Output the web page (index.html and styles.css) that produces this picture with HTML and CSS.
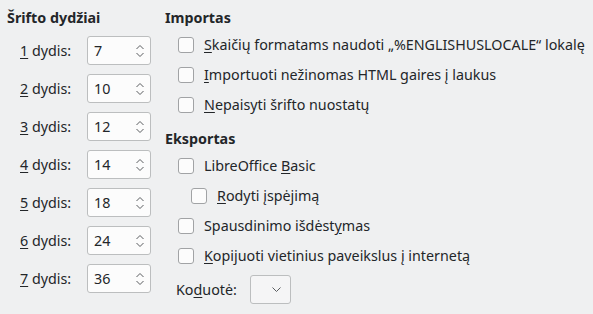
FILE: index.html
```html
<!DOCTYPE html>
<html lang="lt">
<head>
  <meta charset="UTF-8">
  <title>HTML dokumentas</title>
  <link rel="stylesheet" href="styles.css">
</head>
<body>
  <div class="page">
    <div class="sizes">
      <div class="heading">Šrifto dydžiai</div>
      <div class="size-grid">
        <label class="size-label"><u>1</u> dydis:</label>
        <div class="spin"><span class="value">7</span><svg class="arrows" width="10" height="16" viewBox="0 0 10 16"><path d="M1.5 6 L5 2.5 L8.5 6 M1.5 10 L5 13.5 L8.5 10" fill="none" stroke="#5a5d60" stroke-width="1"/></svg></div>
        <label class="size-label"><u>2</u> dydis:</label>
        <div class="spin"><span class="value">10</span><svg class="arrows" width="10" height="16" viewBox="0 0 10 16"><path d="M1.5 6 L5 2.5 L8.5 6 M1.5 10 L5 13.5 L8.5 10" fill="none" stroke="#5a5d60" stroke-width="1"/></svg></div>
        <label class="size-label"><u>3</u> dydis:</label>
        <div class="spin"><span class="value">12</span><svg class="arrows" width="10" height="16" viewBox="0 0 10 16"><path d="M1.5 6 L5 2.5 L8.5 6 M1.5 10 L5 13.5 L8.5 10" fill="none" stroke="#5a5d60" stroke-width="1"/></svg></div>
        <label class="size-label"><u>4</u> dydis:</label>
        <div class="spin"><span class="value">14</span><svg class="arrows" width="10" height="16" viewBox="0 0 10 16"><path d="M1.5 6 L5 2.5 L8.5 6 M1.5 10 L5 13.5 L8.5 10" fill="none" stroke="#5a5d60" stroke-width="1"/></svg></div>
        <label class="size-label"><u>5</u> dydis:</label>
        <div class="spin"><span class="value">18</span><svg class="arrows" width="10" height="16" viewBox="0 0 10 16"><path d="M1.5 6 L5 2.5 L8.5 6 M1.5 10 L5 13.5 L8.5 10" fill="none" stroke="#5a5d60" stroke-width="1"/></svg></div>
        <label class="size-label"><u>6</u> dydis:</label>
        <div class="spin"><span class="value">24</span><svg class="arrows" width="10" height="16" viewBox="0 0 10 16"><path d="M1.5 6 L5 2.5 L8.5 6 M1.5 10 L5 13.5 L8.5 10" fill="none" stroke="#5a5d60" stroke-width="1"/></svg></div>
        <label class="size-label"><u>7</u> dydis:</label>
        <div class="spin"><span class="value">36</span><svg class="arrows" width="10" height="16" viewBox="0 0 10 16"><path d="M1.5 6 L5 2.5 L8.5 6 M1.5 10 L5 13.5 L8.5 10" fill="none" stroke="#5a5d60" stroke-width="1"/></svg></div>
      </div>
    </div>

    <div class="options">
      <div class="heading">Importas</div>
      <div class="check"><span class="box"></span><span><u>S</u>kaičių formatams naudoti „%ENGLISHUSLOCALE“ lokalę</span></div>
      <div class="check"><span class="box"></span><span><u>I</u>mportuoti nežinomas HTML gaires į laukus</span></div>
      <div class="check"><span class="box"></span><span><u>N</u>epaisyti šrifto nuostatų</span></div>

      <div class="heading second">Eksportas</div>
      <div class="check"><span class="box"></span><span>LibreOffice <u>B</u>asic</span></div>
      <div class="check sub"><span class="box"></span><span><u>R</u>odyti įspėjimą</span></div>
      <div class="check"><span class="box"></span><span>Spausdinimo išdėst<u>y</u>mas</span></div>
      <div class="check"><span class="box"></span><span><u>K</u>opijuoti vietinius paveikslus į internetą</span></div>

      <div class="encoding">
        <label>Ko<u>d</u>uotė:</label>
        <div class="combo"><svg width="9" height="5" viewBox="0 0 9 5"><path d="M0.5 0.5 L4.5 4.5 L8.5 0.5" fill="none" stroke="#5a5d60" stroke-width="1"/></svg></div>
      </div>
    </div>
  </div>
</body>
</html>
```

FILE: styles.css
```css
body {
  margin: 0;
  background: #eff0f1;
  color: #232629;
  font-family: 'Noto Sans', sans-serif;
  font-size: 14.3px;
  line-height: 18px;
}

u {
  text-decoration-thickness: 1px;
  text-underline-offset: 2px;
}

.page {
  display: flex;
  height: 314px;
}

.heading {
  font-weight: bold;
  height: 18px;
  margin-top: 9px;
}

/* left column */

.sizes {
  width: 158px;
  padding-left: 7px;
}

.size-grid {
  display: grid;
  grid-template-columns: 80px 64px;
  grid-auto-rows: 29px;
  row-gap: 9px;
  margin-top: 9px;
  align-items: center;
}

.size-label {
  padding-left: 13px;
}

.spin {
  height: 27px;
  background: #fcfcfc;
  border: 1px solid #bcbebf;
  border-radius: 3px;
  display: flex;
  align-items: center;
  justify-content: space-between;
  padding: 0 5px 0 6px;
}

.arrows {
  display: block;
}

/* right column */

.options {
  flex: 1;
}

.heading.second {
  margin-top: 10px;
}

.check {
  display: flex;
  align-items: center;
  height: 30px;
  padding-left: 13px;
  gap: 10px;
}

.options .heading + .check {
  margin-top: 3px;
}

.check.sub {
  padding-left: 26px;
}

.box {
  width: 14px;
  height: 14px;
  border: 1px solid #a1a3a5;
  border-radius: 3px;
  background: #fcfcfc;
  flex: none;
}

.encoding {
  display: flex;
  align-items: center;
  gap: 13px;
  padding-left: 11px;
  margin-top: 4px;
  height: 29px;
}

.combo {
  box-sizing: border-box;
  width: 41px;
  height: 29px;
  border: 1px solid #bcbebf;
  border-radius: 3px;
  background: #f5f5f6;
  display: flex;
  align-items: center;
  justify-content: flex-end;
  padding-right: 9px;
}
```
